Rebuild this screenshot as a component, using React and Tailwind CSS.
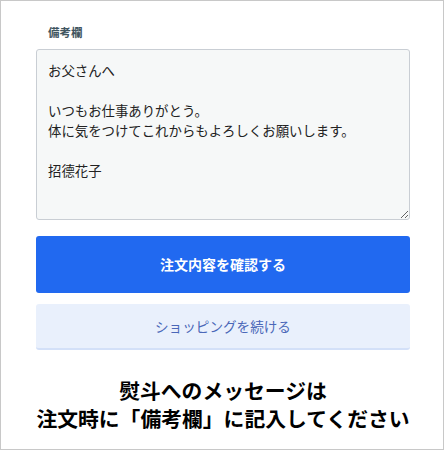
import React from 'react';

const message = `お父さんへ

いつもお仕事ありがとう。
体に気をつけてこれからもよろしくお願いします。

招德花子`;

const App = () => {
  return (
    <div
      className="w-[444px] h-[450px] border border-[#c8c8c8] bg-white flex flex-col pl-[35px] pr-[33px]"
      style={{ fontFamily: '"Noto Sans CJK JP", "Noto Sans", sans-serif' }}
    >
      <label className="mt-[23px] ml-[12px] text-[11.5px] leading-[16px] font-bold text-[#3f5560]">
        備考欄
      </label>
      <textarea
        readOnly
        defaultValue={message}
        className="mt-[9px] h-[171px] w-full resize-y rounded-[3px] border border-[#c9ced4] bg-[#f6f8f8] px-[11px] py-[10px] text-[13.4px] leading-[20px] text-[#222] outline-none"
        style={{ fontFamily: '"Noto Sans CJK JP", sans-serif' }}
      />
      <button className="mt-[16px] h-[57px] w-full rounded-[3px] bg-[#2169f0] text-[14px] font-bold text-white">
        注文内容を確認する
      </button>
      <button className="mt-[11px] h-[46px] w-full rounded-[3px] border-b-2 border-[#d3e0f8] bg-[#e9f0fc] text-[13.6px] text-[#4a67b8]">
        ショッピングを続ける
      </button>
      <div className="mt-[26px] text-center text-[20.8px] leading-[28px] font-bold text-black">
        <p>熨斗へのメッセージは</p>
        <p>注文時に「備考欄」に記入してください</p>
      </div>
    </div>
  );
};

export default App;
